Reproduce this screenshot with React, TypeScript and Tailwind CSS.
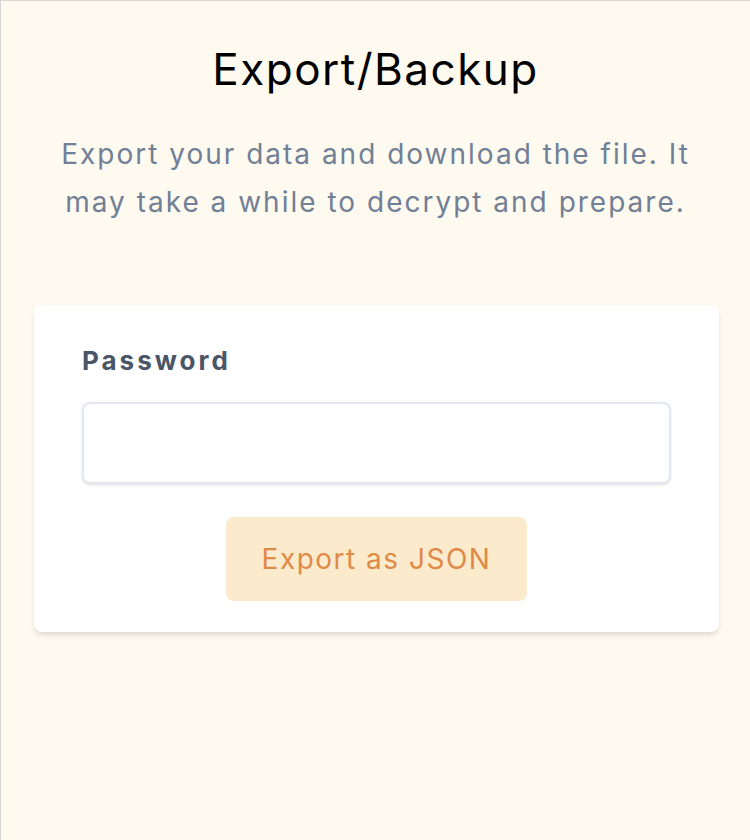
export default function App() {
  return (
    <div className="min-h-[840px] bg-[#FFFAF0] border-t border-l border-[#d6d6d6] font-['Inter',sans-serif]">
      <div className="pt-[42px] text-center">
        <h1 className="text-[44px] leading-[52px] tracking-[1.5px] text-black">
          Export/Backup
        </h1>
        <p className="mt-[35px] mx-auto max-w-[650px] text-[28px] leading-[48px] tracking-[2px] text-[#718096]">
          Export your data and download the file. It may take a while to
          decrypt and prepare.
        </p>
      </div>

      <div className="ml-[33px] mr-[31px] mt-[79px] bg-white rounded-lg shadow-md px-[48px] pt-[40px] pb-[31px]">
        <label className="block text-[26px] leading-[32px] font-bold tracking-[3px] text-[#4A5568]">
          Password
        </label>
        <input
          type="password"
          className="mt-[25px] block w-full h-[82px] border-2 border-[#E2E8F0] rounded-lg shadow-sm bg-white px-4 outline-none"
        />
        <div className="flex justify-center mt-[33px]">
          <button className="h-[84px] px-[36px] rounded-lg bg-[#FBEACC] text-[#E08A47] text-[28px] tracking-[1.5px]">
            Export as JSON
          </button>
        </div>
      </div>
    </div>
  );
}
